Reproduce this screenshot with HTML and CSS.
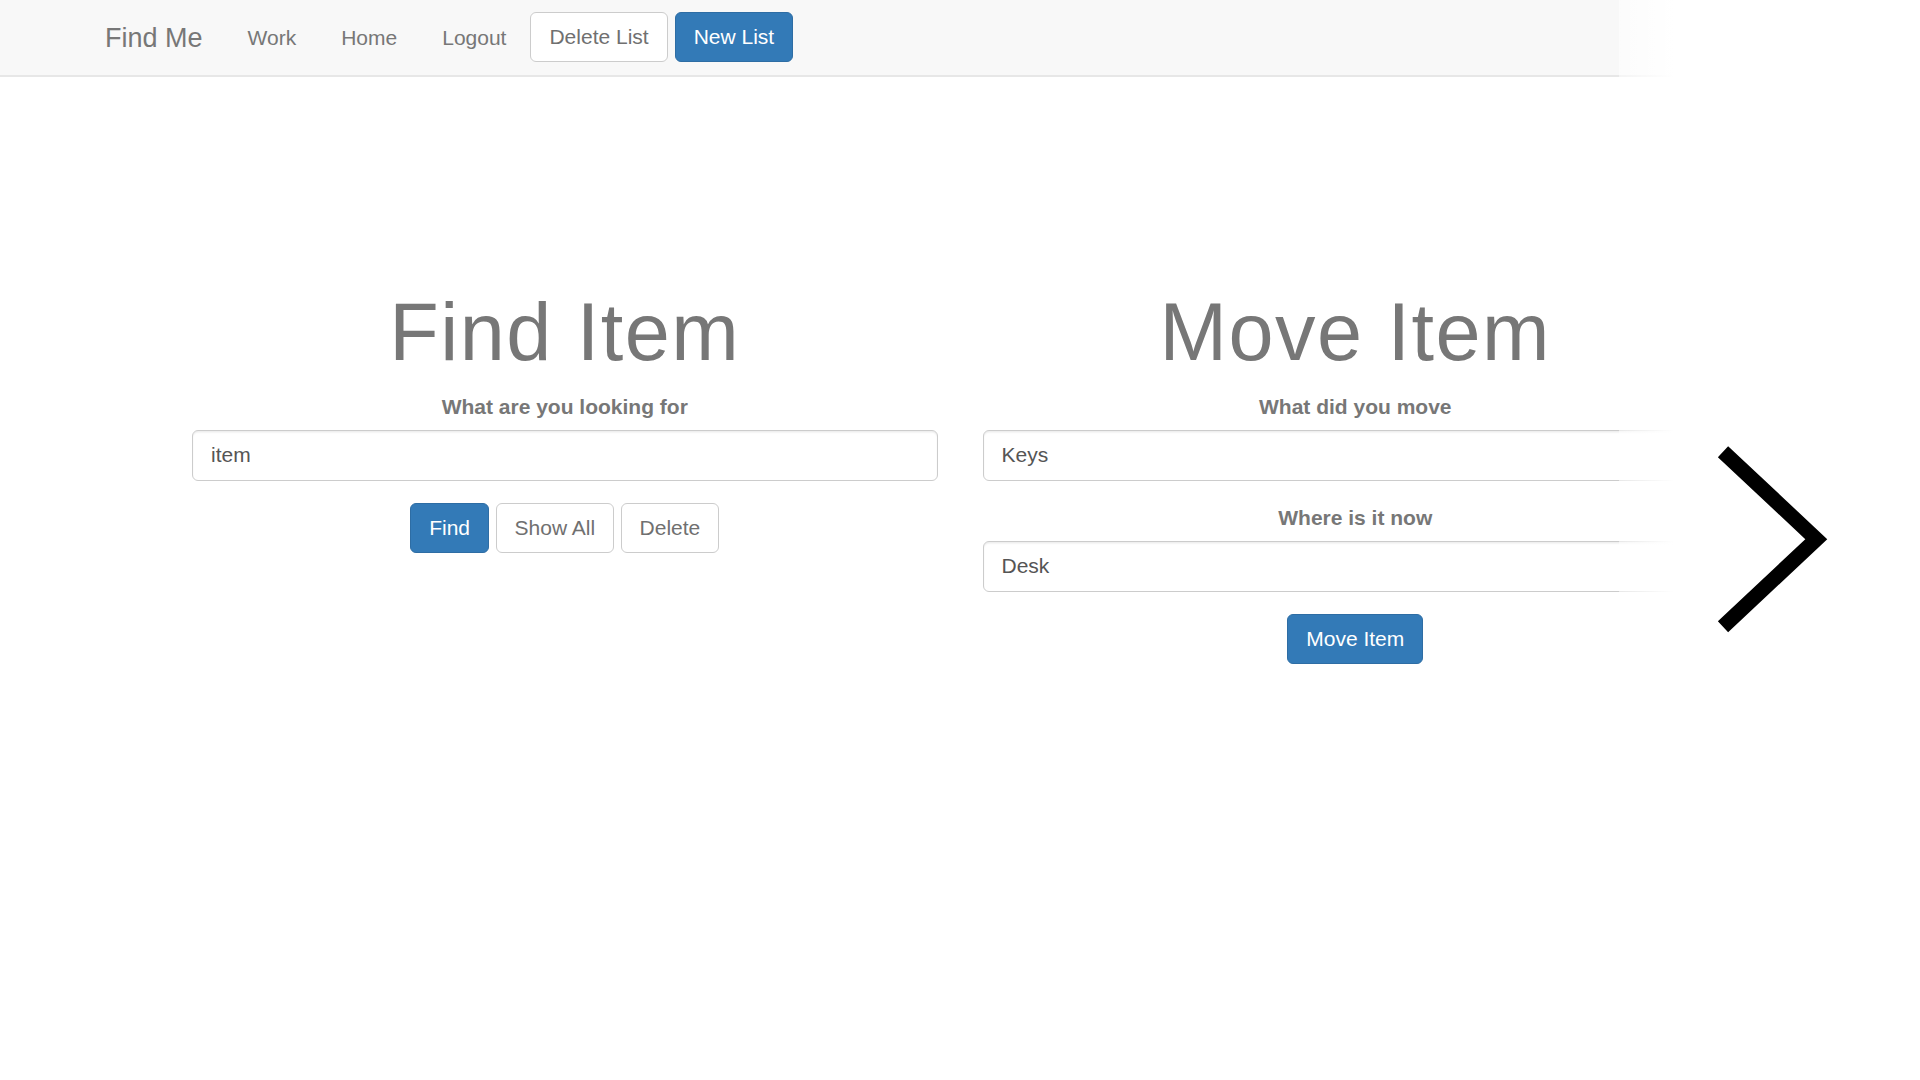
FILE: index.html
```html
<!DOCTYPE html>
<html lang="en">
<head>
<meta charset="utf-8">
<title>Find Me</title>
<link rel="stylesheet" href="styles.css">
</head>
<body>
<nav class="navbar">
  <div class="nav-inner">
    <a class="brand" href="#">Find Me</a>
    <ul class="nav-links">
      <li><a href="#">Work</a></li>
      <li><a href="#">Home</a></li>
      <li><a href="#">Logout</a></li>
    </ul>
    <div class="nav-btns">
      <button class="btn btn-default" type="button">Delete List</button>
      <button class="btn btn-primary" type="button">New List</button>
    </div>
  </div>
</nav>
<main class="main">
  <div class="row">
    <section class="col">
      <h1 class="title">Find Item</h1>
      <div class="form-group">
        <label class="label" for="find">What are you looking for</label>
        <input class="form-control" id="find" type="text" value="item">
      </div>
      <div class="btn-row">
        <button class="btn btn-primary" type="button">Find</button>
        <button class="btn btn-default" type="button">Show All</button>
        <button class="btn btn-default" type="button">Delete</button>
      </div>
    </section>
    <section class="col">
      <h1 class="title">Move Item</h1>
      <div class="form-group">
        <label class="label" for="what">What did you move</label>
        <input class="form-control" id="what" type="text" value="Keys">
      </div>
      <div class="form-group">
        <label class="label" for="where">Where is it now</label>
        <input class="form-control" id="where" type="text" value="Desk">
      </div>
      <div class="btn-row">
        <button class="btn btn-primary" type="button">Move Item</button>
      </div>
    </section>
  </div>
</main>
<a class="carousel-control" href="#" aria-label="Next">
  <svg class="chevron" width="116" height="190" viewBox="0 0 116 190">
    <polyline points="11,6.7 104.3,94.2 11,181.7" fill="none" stroke="#000" stroke-width="15" stroke-linejoin="miter" stroke-miterlimit="10" stroke-linecap="butt"/>
  </svg>
</a>
</body>
</html>
```
FILE: styles.css
```css
* { box-sizing: border-box; }

html, body {
  margin: 0;
  padding: 0;
  height: 100%;
}

body {
  font-family: "Liberation Sans", Arial, sans-serif;
  font-size: 21px;
  line-height: 30px;
  color: #333;
  background: #fff;
  position: relative;
  overflow: hidden;
}

/* Navbar */
.navbar {
  height: 77px;
  background: #f8f8f8;
  border-bottom: 2px solid #e7e7e7;
}

.nav-inner {
  display: flex;
  align-items: flex-start;
  padding-left: 82.5px;
  height: 75px;
}

.brand {
  display: block;
  padding: 22.5px 22.5px;
  height: 75px;
  font-size: 27px;
  line-height: 30px;
  color: #777;
  text-decoration: none;
}

.nav-links {
  display: flex;
  list-style: none;
  margin: 0;
  padding: 0;
}

.nav-links a {
  display: block;
  padding: 22.5px 22.5px;
  line-height: 30px;
  font-size: 21px;
  color: #777;
  text-decoration: none;
}

.nav-btns {
  display: flex;
  gap: 7px;
  margin-top: 12px;
  margin-left: 1.5px;
}

/* Buttons */
.btn {
  display: inline-block;
  font-family: "Liberation Sans", Arial, sans-serif;
  font-size: 21px;
  line-height: 30px;
  padding: 9px 18px;
  border: 1px solid transparent;
  border-radius: 6px;
  margin: 0;
  cursor: pointer;
  white-space: nowrap;
}

.btn-default {
  background: #fff;
  border-color: #ccc;
  color: #707070;
}

.btn-primary {
  background: #337ab7;
  border-color: #2e6da4;
  color: #fff;
}

/* Main */
.main {
  padding-top: 211px;
}

.row {
  display: flex;
  width: 1581px;
  margin: 0 auto;
}

.col {
  width: 790.5px;
  padding: 0 22.5px;
  text-align: center;
}

.title {
  margin: 0 0 15px;
  font-size: 81px;
  line-height: 1.1;
  font-weight: 500;
  letter-spacing: 1.5px;
  color: #777;
}

.form-group {
  margin-bottom: 22.5px;
}

.label {
  display: block;
  font-weight: 700;
  font-size: 21px;
  line-height: 30px;
  margin-bottom: 7.5px;
  color: #777;
}

.form-control {
  display: block;
  width: 100%;
  height: 51px;
  padding: 9px 18px;
  font-family: "Liberation Sans", Arial, sans-serif;
  font-size: 21px;
  line-height: 30px;
  color: #555;
  background: #fff;
  border: 1px solid #ccc;
  border-radius: 6px;
  box-shadow: inset 0 1.5px 1.5px rgba(0, 0, 0, .075);
  outline: none;
  margin: 0;
}

.btn-row {
  display: flex;
  justify-content: center;
  gap: 6.5px;
}

/* Right carousel control overlay */
.carousel-control {
  position: absolute;
  top: 0;
  right: 0;
  width: 301px;
  height: 100%;
  display: flex;
  align-items: center;
  justify-content: center;
  background-image: linear-gradient(to right, rgba(255, 255, 255, .55) 0, #fff 55px, #fff 100%);
}

.chevron {
  display: block;
}
```
